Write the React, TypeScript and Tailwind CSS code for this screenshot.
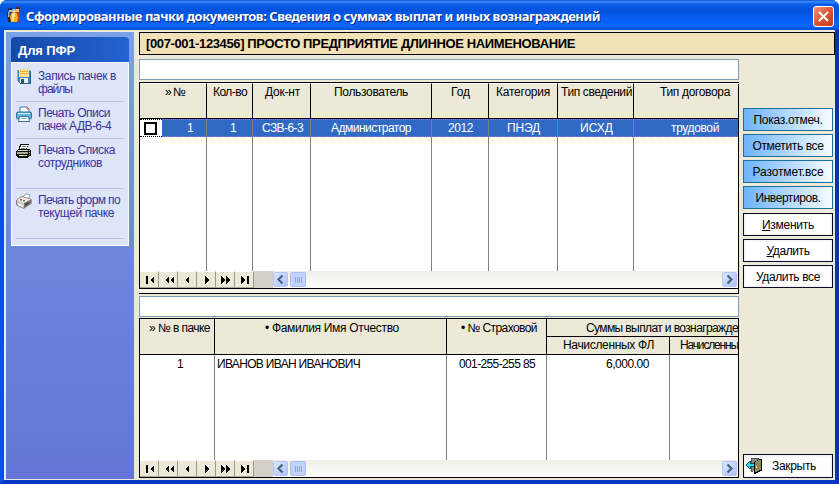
import React, { useLayoutEffect, useRef } from "react";

type FitProps = { w?: number; className?: string; children: React.ReactNode };

/** A single line of text, tracked so that it spans a given number of pixels. */
function Fit({ w, className = "", children }: FitProps) {
  const ref = useRef<HTMLSpanElement>(null);
  useLayoutEffect(() => {
    const el = ref.current;
    if (!el || !w) return;
    el.style.letterSpacing = "0px";
    const n = (el.textContent || "").length;
    const natural = el.getBoundingClientRect().width;
    if (n > 1) el.style.letterSpacing = `${(w - natural) / n}px`;
  }, [w]);
  return (
    <span ref={ref} className={`inline-block whitespace-pre ${className}`}>
      {children}
    </span>
  );
}

function DisketteIcon() {
  return (
    <svg width="16" height="16" viewBox="0 0 16 16" shapeRendering="crispEdges">
      <path d="M1 1h13v13H3l-2-2z" fill="#3b86b8" />
      <path d="M1 1h1v11H1z" fill="#7bbbd8" />
      <path d="M3 0h10v8H3z" fill="#fbe08a" />
      <path d="M4 2h8v1H4zM4 4h8v1H4z" fill="#e2ad45" />
      <path d="M4 9h8v5H4z" fill="#e8eef2" />
      <path d="M5 10h3v4H5z" fill="#2c5575" />
      <path d="M14 2h1v13H4v-1h10z" fill="#27618c" />
    </svg>
  );
}

function BluePrinterIcon() {
  return (
    <svg width="16" height="16" viewBox="0 0 16 16">
      <path d="M4 1h7l2 2v4H4z" fill="#fff" stroke="#3883a9" />
      <path d="M11 1v2h2" fill="none" stroke="#d36b55" />
      <rect x=".5" y="6" width="15" height="7" rx="1.5" fill="#65b3d8" stroke="#256b98" />
      <path d="M2 7.5h12" stroke="#c9efff" />
      <path d="M3.5 10.5h9l1 5h-11z" fill="#fff" stroke="#347899" />
      <path d="M5 12.5h6" stroke="#81b8d5" />
    </svg>
  );
}

function OldPrinterIcon() {
  return (
    <svg width="16" height="16" viewBox="0 0 16 16" shapeRendering="crispEdges">
      <path d="M4 1h9v1h-1v2h-1v2h3v1h1v6h-2v1h-1v1H2v-1H1v-1H0V8h1V7h1V6h1V3h1z" fill="#101010" />
      <path d="M5 2h7v1h-1v2h-1v1H4V4h1z" fill="#fff" />
      <path d="M6 3h4v1H6zM5 5h4v1H5z" fill="#777" />
      <path d="M2 7h10v1H2z" fill="#d8d8c4" />
      <path d="M1 9h11v2H1z" fill="#a9aa91" />
      <path d="M3 12h8v1H3z" fill="#eee" />
      <path d="M7 12h3v1H7z" fill="#dede20" />
      <path d="M13 7h1v1h-1zM13 9h1v1h-1zM13 11h1v1h-1z" fill="#b5b59e" />
    </svg>
  );
}

function GreyPrinterIcon() {
  return (
    <svg width="16" height="16" viewBox="0 0 16 16">
      <path d="M7 4 10 .8 14 2l-2 4z" fill="#fff" stroke="#777" strokeWidth=".7" />
      <path d="m.6 7 5-3.5 9.6 2.8v4.2l-7.5 4.9L.6 12z" fill="#c9c9c3" stroke="#66665f" strokeWidth=".8" />
      <path d="m1 7 7 3 7-3.5-9-2.6z" fill="#eeeeea" />
      <path d="m8 10 7-3.5v4L8 15z" fill="#777" />
      <path d="m2 10 5 2.5v1.8L2 12z" fill="#f8f8f8" />
      <path d="M4 6h2v1.5H4z" fill="#d6382f" />
      <path d="M7 7h2v1.5H7z" fill="#38a248" />
      <path d="m9 12 4-2.3" stroke="#222" />
    </svg>
  );
}

function AppIcon() {
  return (
    <svg width="14" height="16" viewBox="0 0 14 16">
      <path d="M2 2h3v3H2z" fill="#e8b27c" />
      <path d="M1 1.5h4V3H1z" fill="#351b17" />
      <path d="M0 5h5v7l-1 3H1z" fill="#27283d" />
      <path d="M1 5h1v5H1z" fill="#a9b4cc" />
      <path d="M2 5h1v5H2z" fill="#e33" />
      <path d="M9 1h3v4H9z" fill="#f3c39a" />
      <path d="M9 0h4v2H9z" fill="#5b2a13" />
      <path d="M9 5h4v7l-1 3H9z" fill="#b53b19" />
      <circle cx="7" cy="4" r="2" fill="#f6d1a3" />
      <path d="M4 6h6l1 5-1 4H4L3 10z" fill="#f3b221" />
      <path d="M5 7h2v7H5z" fill="#ffe783" />
      <path d="M7 6v4" stroke="#fff" />
    </svg>
  );
}

function DoorIcon() {
  return (
    <svg width="16" height="16" viewBox="0 0 16 16" shapeRendering="crispEdges">
      <path d="M5 0h8v2H7v12H5z" fill="#55554b" />
      <path d="M6 1h5v12H6z" fill="#888" />
      <path d="M8 4l6-3h2v12h-2v1h-2v1h-2v1H8z" fill="#000" />
      <path d="M9 4h1V3h2V2h3v10h-2v1h-2v1H9z" fill="#8b8852" />
      <path d="M10 8h1v2h-1z" fill="#e9e4a0" />
      <path d="M0 6h1V5h1V4h1V3h2v2h3v4H5v2H3v-1H2V9H1V8H0z" fill="#1b4a50" />
      <path d="M1 6h1V5h1V4h1v2h4v2H4v2H3V9H2V8H1z" fill="#25dce8" />
    </svg>
  );
}

const sideItems = [
  { icon: <DisketteIcon />, lines: [["Запись пачек в", 78], ["файлы", 34]], box: "h-[38px] pt-[5px]" },
  { icon: <BluePrinterIcon />, lines: [["Печать Описи", 72], ["пачек АДВ-6-4", 73]], box: "h-[37px] pt-[4px]" },
  { icon: <OldPrinterIcon />, lines: [["Печать Списка", 77], ["сотрудников", 64]], box: "h-[50px] pt-[4px]" },
  { icon: <GreyPrinterIcon />, lines: [["Печать форм по", 82], ["текущей пачке", 76]], box: "h-[50px] pt-[4px]" },
] as { icon: React.ReactNode; lines: [string, number][]; box: string }[];

function Sidebar() {
  return (
    <aside className="w-[128px] shrink-0 bg-linear-to-b from-[#7ba2e7] via-[#6c87dc] to-[#6375d6] px-[5px] pt-[5px]">
      <div className="flex h-[25px] items-center rounded-t-[4px] bg-linear-to-r from-[#1549a8] to-[#2463d1] pt-[2px] pl-[7px] text-[13px] font-bold text-white">
        <Fit w={57}>Для ПФР</Fit>
      </div>
      <div className="h-[184px] border border-white bg-[#dfe5f8] px-[4px] pt-[1px] text-[12px] leading-[13px] text-[#37339a]">
        {sideItems.map((it) => (
          <div key={it.lines[0][0]} className={`flex gap-[6px] border-b border-[#bbbfe3] ${it.box}`}>
            <div className="shrink-0">{it.icon}</div>
            <div className="flex flex-col pt-[1px]">
              {it.lines.map(([t, w]) => (
                <div key={t} className="h-[13px]">
                  <Fit w={w}>{t}</Fit>
                </div>
              ))}
            </div>
          </div>
        ))}
      </div>
    </aside>
  );
}

type Col = { w: string; hp: string; h: string; hw: number; cp: string; c: string; cw?: number };

const batchCols: Col[] = [
  { w: "w-[67px]", hp: "pl-[25px]", h: "» №", hw: 20, cp: "pl-[47px]", c: "1" },
  { w: "w-[46px]", hp: "pl-[6px]", h: "Кол-во", hw: 34, cp: "pl-[23px]", c: "1" },
  { w: "w-[58px]", hp: "pl-[12px]", h: "Док-нт", hw: 35, cp: "pl-[9px]", c: "СЗВ-6-3", cw: 41 },
  { w: "w-[121px]", hp: "pl-[23px]", h: "Пользователь", hw: 74, cp: "pl-[20px]", c: "Администратор", cw: 80 },
  { w: "w-[57px]", hp: "pl-[19px]", h: "Год", hw: 19, cp: "pl-[16px]", c: "2012", cw: 25 },
  { w: "w-[69px]", hp: "pl-[7px]", h: "Категория", hw: 54, cp: "pl-[18px]", c: "ПНЭД", cw: 33 },
  { w: "w-[76px]", hp: "pl-[3px]", h: "Тип сведений", hw: 71, cp: "pl-[22px]", c: "ИСХД", cw: 33 },
  { w: "w-[105px]", hp: "pl-[26px]", h: "Тип договора", hw: 70, cp: "pl-[37px]", c: "трудовой", cw: 48 },
];

const navGlyphs = [
  "M6 4h2v8H6zM14 4v8l-4-4z",
  "M10 4v8L6 8zM15 4v8l-4-4z",
  "M11 4v8L7 8z",
  "M8 4v8l4-4z",
  "M5 4v8l4-4zM10 4v8l4-4z",
  "M6 4v8l4-4zM12 4h2v8h-2z",
];

function ScrollArrow({ d }: { d: string }) {
  return (
    <div className="h-[15px] w-[15px] shrink-0 rounded-[2px] border border-[#b3c5f2] bg-linear-to-br from-[#dce6fe] to-[#aec4f5]">
      <svg width="13" height="13" viewBox="0 0 13 13">
        <path d={d} fill="none" stroke="#4d6185" strokeWidth="2.2" />
      </svg>
    </div>
  );
}

function Navigator() {
  return (
    <div className="flex h-[17px] shrink-0">
      {navGlyphs.map((d) => (
        <div key={d} className="h-[17px] w-[19px] border-t border-r border-b border-t-white border-r-[#9c9a8c] border-b-[#aca899] bg-[#ece9d8]">
          <svg width="18" height="16" viewBox="0 0 18 16" shapeRendering="crispEdges">
            <path d={d} fill="#000" />
          </svg>
        </div>
      ))}
      <div className="w-[19px] bg-[#d4d0c8]" />
      <div className="flex flex-1 items-center bg-linear-to-b from-[#efeee8] to-[#fefefb] pr-px">
        <ScrollArrow d="M8.5 2.5 4.5 6.5l4 4" />
        <div className="ml-[2px] flex h-[15px] w-[16px] items-center justify-center gap-px rounded-[2px] border border-[#a9bdf0] bg-[#c3d3fb]">
          <i className="h-[6px] w-px bg-[#8ca5e4]" />
          <i className="h-[6px] w-px bg-[#8ca5e4]" />
          <i className="h-[6px] w-px bg-[#8ca5e4]" />
          <i className="h-[6px] w-px bg-[#8ca5e4]" />
        </div>
        <div className="flex-1" />
        <ScrollArrow d="M4.5 2.5l4 4-4 4" />
      </div>
    </div>
  );
}

function BatchGrid() {
  return (
    <div className="mt-[2px] flex h-[207px] w-[600px] flex-col border border-black bg-white leading-[14px]">
      <div className="flex h-[36px] shrink-0 border-b border-black bg-[#ece9d8]">
        {batchCols.map((c, i) => (
          <div key={c.h} className={`shrink-0 overflow-hidden border-t border-t-white pt-[1px] ${c.w} ${c.hp} ${i < 7 ? "border-r border-r-black" : ""}`}>
            <Fit w={c.hw}>{c.h}</Fit>
          </div>
        ))}
      </div>
      <div className="flex h-[18px] shrink-0 border-y border-dotted border-[#9b8d70] bg-[#316ac5] text-white">
        <div className="-my-px flex w-[22px] shrink-0 items-center border-y border-dotted border-black bg-white pl-[4px]">
          <div className="h-[13px] w-[13px] border-2 border-black" />
        </div>
        {batchCols.map((c, i) => (
          <div key={c.h} className={`shrink-0 pt-px ${i === 0 ? "w-[45px] pl-[25px]" : `${c.w} ${c.cp}`} ${i < 7 ? "border-r border-[#808080]" : ""}`}>
            <Fit w={c.cw}>{c.c}</Fit>
          </div>
        ))}
      </div>
      <div className="flex flex-1">
        {batchCols.map((c, i) => (
          <div key={c.h} className={`shrink-0 ${c.w} ${i < 7 ? "border-r border-[#808080]" : ""}`} />
        ))}
      </div>
      <Navigator />
    </div>
  );
}

function PersonGrid() {
  return (
    <div className="mt-[1px] flex h-[160px] w-[600px] flex-col overflow-hidden border border-black bg-white leading-[14px]">
      <div className="flex h-[36px] shrink-0 border-b border-black bg-[#ece9d8]">
        <div className="w-[75px] shrink-0 border-r border-black pt-[2px] pl-[9px]"><Fit w={61}>» № в пачке</Fit></div>
        <div className="w-[232px] shrink-0 border-r border-black pt-[2px] pl-[50px]"><Fit w={134}>• Фамилия Имя Отчество</Fit></div>
        <div className="w-[100px] shrink-0 border-r border-black pt-[2px] pl-[14px]"><Fit w={76}>• № Страховой</Fit></div>
        <div className="flex w-[191px] shrink-0 flex-col">
          <div className="h-[18px] shrink-0 border-b border-black pt-[2px] pl-[39px]"><Fit w={152}>Суммы выплат и вознагражде</Fit></div>
          <div className="flex flex-1">
            <div className="w-[123px] shrink-0 border-r border-black pt-[1px] pl-[16px]"><Fit w={91}>Начисленных ФЛ</Fit></div>
            <div className="w-[68px] shrink-0 pt-[1px] pl-[10px]"><Fit w={58}>Начисленны</Fit></div>
          </div>
        </div>
      </div>
      <div className="flex flex-1">
        <div className="w-[75px] shrink-0 border-r border-[#808080] pt-[2px] pl-[37px]">1</div>
        <div className="w-[232px] shrink-0 border-r border-[#808080] pt-[2px] pl-[2px]"><Fit w={143}>ИВАНОВ ИВАН ИВАНОВИЧ</Fit></div>
        <div className="w-[100px] shrink-0 border-r border-[#808080] pt-[2px] pl-[12px]"><Fit w={76}>001-255-255 85</Fit></div>
        <div className="w-[123px] shrink-0 border-r border-[#808080] pt-[2px] pl-[59px]"><Fit w={43}>6,000.00</Fit></div>
      </div>
      <Navigator />
    </div>
  );
}

const blueButtons: [string, number][] = [
  ["Показ.отмеч.", 69],
  ["Отметить все", 71],
  ["Разотмет.все", 71],
  ["Инвертиров.", 65],
];

const plainBtn = "flex h-[23px] w-[90px] items-center justify-center border border-[#0a0a28] bg-white shadow-[inset_0_0_3px_#dcdce4]";

function Actions() {
  return (
    <div className="ml-[4px] flex w-[90px] flex-col pt-[53px] leading-[14px]">
      <div className="flex flex-col gap-[3px]">
        {blueButtons.map(([t, w]) => (
          <button key={t} className="flex h-[23px] w-[90px] items-center justify-center border border-[#1d7098] bg-linear-to-r from-[#6cb3fb] to-[#f6fbff]">
            <Fit w={w}>{t}</Fit>
          </button>
        ))}
      </div>
      <div className="mt-[4px] flex flex-col gap-[3px]">
        <button className={plainBtn}><Fit w={52}><u>И</u>зменить</Fit></button>
        <button className={plainBtn}><Fit w={43}><u>У</u>далить</Fit></button>
        <button className={plainBtn}><Fit w={64}>Удалить все</Fit></button>
      </div>
      <button className="mt-auto mb-[2px] flex h-[24px] w-[90px] items-center border border-[#0a0a28] bg-white pl-[2px] shadow-[inset_0_0_3px_#dcdce4]">
        <DoorIcon />
        <Fit w={44} className="ml-[10px]">Закрыть</Fit>
      </button>
    </div>
  );
}

export default function App() {
  return (
    <div className="flex h-[484px] w-[839px] flex-col overflow-hidden rounded-t-[7px] bg-[#0842d0] text-[12px] text-black [font-family:'Liberation_Sans',Arial,sans-serif]">
      <div className="flex h-[30px] shrink-0 items-center bg-[linear-gradient(180deg,#0a55d8_0%,#3a8cf8_6%,#0a5ce6_14%,#0453dc_35%,#0560f4_65%,#0666fc_85%,#0450d0_100%)] pr-[5px] pl-[7px]">
        <AppIcon />
        <Fit w={574} className="mt-[2px] ml-[5px] text-[13px] leading-[18px] font-bold text-white [font-family:'Noto_Sans',sans-serif] [text-shadow:1px_1px_0_#0a2a80]">
          Сформированные пачки документов: Сведения о суммах выплат и иных вознаграждений
        </Fit>
        <div className="mt-[3px] ml-auto flex h-[21px] w-[21px] items-center justify-center rounded-[3px] border border-white bg-linear-to-br from-[#ee9478] via-[#dc5534] to-[#c03c18]">
          <svg width="13" height="13" viewBox="0 0 13 13">
            <path d="M2 2l9 9M11 2l-9 9" stroke="#fff" strokeWidth="2" />
          </svg>
        </div>
      </div>
      <div className="flex flex-1 border-r-4 border-b-4 border-l-4 border-r-[#0831b8] border-b-[#0838c4] border-l-[#0b50e0] bg-[#ece9d8]">
        <div className="flex flex-1 border-l-2 border-[#e4ecfa] pt-[2px]">
          <div className="flex pb-[1px]"><Sidebar /></div>
          <div className="ml-[5px] flex flex-1 flex-col">
            <div className="flex h-[23px] w-[696px] shrink-0 items-center border border-black bg-[#f2e1b7] pl-[6px] text-[13px] font-bold">
              <Fit w={429}>[007-001-123456] ПРОСТО ПРЕДПРИЯТИЕ ДЛИННОЕ НАИМЕНОВАНИЕ</Fit>
            </div>
            <div className="flex flex-1">
              <div className="flex w-[600px] shrink-0 flex-col">
                <div className="mt-[4px] h-[21px] border border-[#7f9db9] bg-white" />
                <BatchGrid />
                <div className="h-[5px] shrink-0 border-r border-b border-black bg-[#f7f3e8]" />
                <div className="mt-[2px] h-[21px] shrink-0 border border-[#7f9db9] bg-white" />
                <PersonGrid />
              </div>
              <Actions />
            </div>
          </div>
        </div>
      </div>
    </div>
  );
}
